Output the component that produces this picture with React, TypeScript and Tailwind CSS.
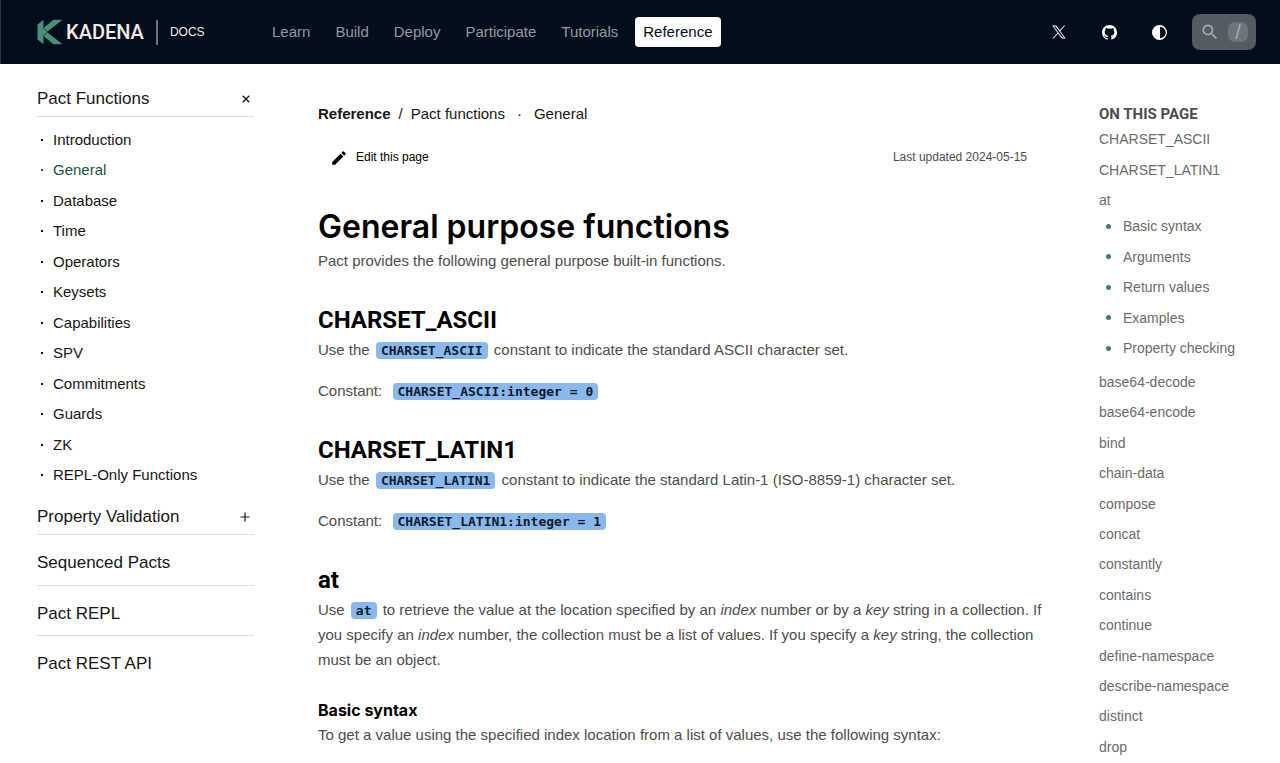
import { useState, type ReactNode } from 'react'

const navItems = ['Learn', 'Build', 'Deploy', 'Participate', 'Tutorials']

const functionLinks = [
  'Introduction',
  'General',
  'Database',
  'Time',
  'Operators',
  'Keysets',
  'Capabilities',
  'SPV',
  'Commitments',
  'Guards',
  'ZK',
  'REPL-Only Functions',
]

const atLinks = ['Basic syntax', 'Arguments', 'Return values', 'Examples', 'Property checking']

const tocLinks = [
  'base64-decode',
  'base64-encode',
  'bind',
  'chain-data',
  'compose',
  'concat',
  'constantly',
  'contains',
  'continue',
  'define-namespace',
  'describe-namespace',
  'distinct',
  'drop',
]

function Logo() {
  return (
    <a href="#home" aria-label="Kadena Docs" className="flex w-[235px] shrink-0 items-center pl-9">
      <svg width="26" height="26" viewBox="0 0 26 26" fill="#4a9079" aria-hidden="true">
        <path d="M0.5 5.5 6.5 0.8V9.6L10.5 13 6.5 16.4V25.2L0.5 20.5Z" />
        <path d="M16.5 0.8H25.5L10.5 12.4 7 9.4V8.4Z" />
        <path d="M16.5 25.2H25.5L10.5 13.6 7 16.6V17.6Z" />
      </svg>
      <span className="ml-[3px] font-[Roboto,sans-serif] text-[20px] leading-6 font-medium text-[#f5ece6]">KADENA</span>
      <span className="ml-3 h-[25px] w-[2px] bg-[#6f757c]" />
      <span className="ml-3 text-[12px] leading-6 text-[#f0ebe7]">DOCS</span>
    </a>
  )
}

function Header() {
  return (
    <header className="flex h-16 items-center border-l border-[#2c343d] bg-[#020e1b]">
      <Logo />
      <nav aria-label="Main" className="ml-7 flex items-center gap-[9px]">
        {navItems.map((item) => (
          <a key={item} href={`#${item}`} className="px-2 text-[15px] leading-[30px] text-[#96999c]">
            {item}
          </a>
        ))}
        <a href="#Reference" aria-current="page" className="rounded-[4px] bg-white px-2 text-[15px] leading-[30px] text-[#020e1b]">
          Reference
        </a>
      </nav>
      <div className="ml-auto flex items-center pr-6">
        <a href="#x" aria-label="X" className="flex w-[50px] justify-center text-white">
          <svg width="14" height="14" viewBox="0 0 24 24" fill="currentColor" aria-hidden="true">
            <path d="M14.2 10.2 22.7 1h-2l-7.4 8.2L7.4 1H.6l8.9 12.4L.6 23h2l7.8-8.4L16.6 23h6.8zM3.4 2.5h3.1l14.1 19h-3.1z" />
          </svg>
        </a>
        <a href="#github" aria-label="GitHub" className="flex w-[50px] justify-center text-white">
          <svg width="15" height="15" viewBox="0 0 16 16" fill="currentColor" aria-hidden="true">
            <path d="M8 0C3.58 0 0 3.58 0 8c0 3.54 2.29 6.53 5.47 7.59.4.07.55-.17.55-.38 0-.19-.01-.82-.01-1.49-2.01.37-2.53-.49-2.69-.94-.09-.23-.48-.94-.82-1.13-.28-.15-.68-.52-.01-.53.63-.01 1.08.58 1.23.82.72 1.21 1.87.87 2.33.66.07-.52.28-.87.51-1.07-1.78-.2-3.64-.89-3.64-3.95 0-.87.31-1.59.82-2.15-.08-.2-.36-1.02.08-2.12 0 0 .67-.21 2.2.82.64-.18 1.32-.27 2-.27s1.36.09 2 .27c1.53-1.04 2.2-.82 2.2-.82.44 1.1.16 1.92.08 2.12.51.56.82 1.27.82 2.15 0 3.07-1.87 3.75-3.65 3.95.29.25.54.73.54 1.48 0 1.07-.01 1.93-.01 2.2 0 .21.15.46.55.38A8.01 8.01 0 0 0 16 8c0-4.42-3.58-8-8-8z" />
          </svg>
        </a>
        <button type="button" aria-label="Toggle theme" className="flex w-[50px] justify-center text-white">
          <svg width="15" height="15" viewBox="0 0 16 16" fill="currentColor" aria-hidden="true">
            <path fillRule="evenodd" d="M8 0a8 8 0 1 0 0 16A8 8 0 0 0 8 0zM8.5 1.800a6.2 6.2 0 0 1 0 12.4z" />
          </svg>
        </button>
        <button type="button" aria-label="Search" className="ml-2 flex h-9 w-16 items-center justify-between rounded-lg bg-[#535b63] px-2 text-[#a9acb0]">
          <svg width="20" height="20" viewBox="0 0 24 24" fill="currentColor" aria-hidden="true">
            <path d="M15.5 14h-.79l-.28-.27A6.47 6.47 0 0 0 16 9.5 6.5 6.5 0 1 0 9.5 16c1.61 0 3.09-.59 4.23-1.57l.27.28v.79l5 4.99L20.49 19zm-6 0C7.01 14 5 11.99 5 9.5S7.01 5 9.5 5 14 7.01 14 9.5 11.99 14 9.5 14" />
          </svg>
          <span className="flex size-5 items-center justify-center rounded-[7px] bg-[#6d747e] text-[20px] leading-5">/</span>
        </button>
      </div>
    </header>
  )
}

function Sidebar() {
  const [open, setOpen] = useState(true)
  const row = 'flex items-center justify-between border-b border-[#e0e0e0] text-[17px] text-[#161616]'
  return (
    <aside className="ml-[37px] w-[217px] shrink-0 pt-[17px]">
      <button type="button" aria-expanded={open} onClick={() => setOpen(!open)} className={`${row} h-9 w-full pr-1`}>
        Pact Functions
        <svg width="8" height="8" viewBox="0 0 8 8" stroke="currentColor" strokeWidth="1.3" aria-hidden="true">
          <path d="M0.7 0.7 7.3 7.3M7.3 0.7 0.7 7.3" />
        </svg>
      </button>
      {open && (
        <ul className="mt-[11px] flex h-[359px] flex-col justify-between text-[15px] leading-6">
          {functionLinks.map((name) => (
            <li key={name}>
              <a href={`#${name}`} className={`flex items-center gap-[10px] pl-1 ${name === 'General' ? 'text-[#22513f]' : 'text-[#161616]'}`}>
                <span className="size-[2px] bg-current" />
                {name}
              </a>
            </li>
          ))}
        </ul>
      )}
      <button type="button" className={`${row} mt-3 h-9 w-full pr-1`}>
        Property Validation
        <svg width="10" height="10" viewBox="0 0 10 10" stroke="currentColor" strokeWidth="1.2" aria-hidden="true">
          <path d="M5 0.5V9.5M0.5 5H9.5" />
        </svg>
      </button>
      <a href="#sequenced" className={`${row} h-[51px] pt-[6px]`}>Sequenced Pacts</a>
      <a href="#repl" className={`${row} h-[50px] pt-[6px]`}>Pact REPL</a>
      <a href="#rest" className="flex h-[50px] items-center pt-[6px] text-[17px] text-[#161616]">Pact REST API</a>
    </aside>
  )
}

function Code({ children }: { children: ReactNode }) {
  return (
    <code className="mx-[2px] rounded-[4px] bg-[#8ab8ec] px-[5px] py-px font-['DejaVu_Sans_Mono',monospace] text-[13px] leading-[15px] font-bold text-[#0b1c2c]">
      {children}
    </code>
  )
}

function H2({ children }: { children: ReactNode }) {
  return <h2 className="mt-[31px] mb-px font-[Roboto,sans-serif] text-[24px] leading-8 font-bold text-black">{children}</h2>
}

function Article() {
  return (
    <main className="ml-16 min-w-0 flex-1 pt-[37px] text-[15px] leading-[25px] text-[#4d4d4d]">
      <nav aria-label="Breadcrumb" className="flex items-center text-[#161616]">
        <a href="#reference" className="font-bold">Reference</a>
        <span className="mx-2">/</span>
        <a href="#functions">Pact functions</a>
        <span className="mx-3">·</span>
        <a href="#general">General</a>
      </nav>
      <div className="mt-[19px] flex items-center justify-between text-[12px]">
        <a href="#edit" className="flex items-center gap-2 pl-3 text-black">
          <svg width="18" height="18" viewBox="0 0 24 24" fill="currentColor" aria-hidden="true">
            <path d="M3 17.25V21h3.75L17.81 9.94l-3.75-3.75zM20.71 7.04a1 1 0 0 0 0-1.41l-2.34-2.34a1 1 0 0 0-1.41 0l-1.83 1.83 3.75 3.75z" />
          </svg>
          Edit this page
        </a>
        <span>Last updated 2024-05-15</span>
      </div>
      <h1 className="mt-9 font-['Inter',sans-serif] text-[32px] leading-[42px] font-semibold text-black">General purpose functions</h1>
      <p>Pact provides the following general purpose built-in functions.</p>

      <H2>CHARSET_ASCII</H2>
      <p>Use the <Code>CHARSET_ASCII</Code> constant to indicate the standard ASCII character set.</p>
      <p className="mt-4">Constant: &nbsp;<Code>CHARSET_ASCII:integer = 0</Code></p>

      <H2>CHARSET_LATIN1</H2>
      <p>Use the <Code>CHARSET_LATIN1</Code> constant to indicate the standard Latin-1 (ISO-8859-1) character set.</p>
      <p className="mt-4">Constant: &nbsp;<Code>CHARSET_LATIN1:integer = 1</Code></p>

      <H2>at</H2>
      <p className="-mr-5">
        Use <Code>at</Code> to retrieve the value at the location specified by an <em>index</em> number or by a <em>key</em> string in a
        collection. If you specify an <em>index</em> number, the collection must be a list of values. If you specify a <em>key</em> string,
        the collection must be an object.
      </p>

      <h3 className="mt-[26px] font-['Inter',sans-serif] text-[16px] leading-6 font-bold text-black">Basic syntax</h3>
      <p>To get a value using the specified index location from a list of values, use the following syntax:</p>
    </main>
  )
}

function Toc() {
  return (
    <aside className="ml-[72px] w-[181px] shrink-0 pt-[38px] text-[14px] leading-6 text-[#6b6b6b]">
      <h2 className="font-[Roboto,sans-serif] text-[15px] leading-6 font-bold text-[#4d4d4d]">ON THIS PAGE</h2>
      <ul className="mt-px flex h-[85px] flex-col justify-between">
        {['CHARSET_ASCII', 'CHARSET_LATIN1', 'at'].map((name) => (
          <li key={name}><a href={`#${name}`}>{name}</a></li>
        ))}
      </ul>
      <ul className="mt-[2px] flex h-[146px] flex-col justify-between">
        {atLinks.map((name) => (
          <li key={name}>
            <a href={`#${name}`} className="flex items-center gap-3 pl-[7px]">
              <span className="size-[5px] rounded-full bg-[#3f8068]" />
              {name}
            </a>
          </li>
        ))}
      </ul>
      <ul className="mt-[10px] flex h-[389px] flex-col justify-between">
        {tocLinks.map((name) => (
          <li key={name}><a href={`#${name}`}>{name}</a></li>
        ))}
      </ul>
    </aside>
  )
}

export default function App() {
  return (
    <div className="min-h-screen bg-white font-['Liberation_Sans',Arial,sans-serif]">
      <Header />
      <div className="flex items-start">
        <Sidebar />
        <Article />
        <Toc />
      </div>
    </div>
  )
}
